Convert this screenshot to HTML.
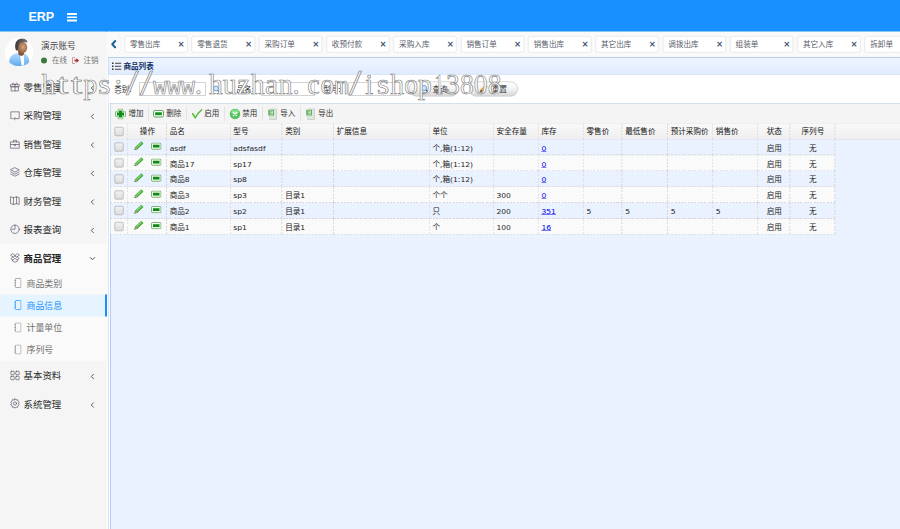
<!DOCTYPE html>
<html lang="zh-CN"><head><meta charset="utf-8"><title>ERP</title>
<style>
html,body{margin:0;padding:0;width:900px;height:529px;overflow:hidden;background:#fafafa;}
#root{position:absolute;left:0;top:0;width:1800px;height:1058px;transform:scale(.5);transform-origin:0 0;font-family:"Liberation Sans","Noto Sans CJK SC",sans-serif;color:#333;overflow:hidden;background:#fafafa;}
#root *{box-sizing:border-box;}
.abs{position:absolute;}
#hdr{position:absolute;left:0;top:0;width:1800px;height:63.6px;background:#1890ff;}
#logo{position:absolute;left:57px;top:15px;font-size:25px;line-height:34px;font-weight:bold;color:#fff;}
#burger{position:absolute;left:134px;top:26px;width:20px;height:17px;}
#burger i{position:absolute;left:0;width:20px;height:3.6px;background:#fff;border-radius:1px;}
#side{position:absolute;left:0;top:63px;width:213.4px;height:995px;background:#f5f5f5;}
#avatar{position:absolute;left:10px;top:13px;width:57px;height:57px;border-radius:50%;background:#fff;overflow:hidden;}
#uname{position:absolute;left:82px;top:16px;font-size:17.4px;line-height:26px;color:#444;font-weight:400;white-space:nowrap;}
#ustat{position:absolute;left:82px;top:47px;font-size:15px;line-height:22px;color:#777;white-space:nowrap;}
#ustat .dot{position:absolute;left:0;top:5px;width:12px;height:12px;border-radius:50%;background:#3a7a3d;}
.mi{position:absolute;left:0;width:214px;height:57px;line-height:57px;font-size:18.9px;color:#2a2a2a;font-weight:400;white-space:nowrap;}
.mi .t{position:absolute;left:47px;top:0;}
.mi svg.ic{position:absolute;left:19px;top:16.5px;width:22px;height:22px;}
.mi svg.ar{position:absolute;left:180px;top:23px;width:10px;height:14px;}
.mi.act{background:#fafafa;color:#222;font-weight:700;}
#sub{position:absolute;left:0;width:214px;background:#fafafa;}
.si{position:absolute;left:0;width:214px;height:44px;line-height:44px;font-size:17.8px;color:#717171;white-space:nowrap;}
.si .t{position:absolute;left:53px;top:0;}
.si svg{position:absolute;left:28px;top:11px;width:15px;height:20px;color:#8c8c8c;}
.si.act svg{color:#1890ff;}
.si.act{background:#e6f4ff;color:#1890ff;border-right:4px solid #1890ff;}
/* tabs */
#tabs{position:absolute;left:214px;top:63px;width:1586px;height:52px;background:#fafafa;}
#tleft{position:absolute;left:2px;top:8px;width:24.5px;height:35px;border-right:1.5px solid #dcdcdc;border-radius:0 5px 5px 0;}
.tab{position:absolute;top:8.6px;width:126.2px;height:33px;background:#fff;border:1px solid #d9d9d9;border-radius:4px;font-size:15.2px;line-height:31px;color:#5a606a;white-space:nowrap;}
.tab .t{position:absolute;left:10px;top:0;}
.tab .x{position:absolute;right:4.5px;top:-1px;font-size:17px;font-weight:bold;color:#3f5573;font-family:"DejaVu Sans","Liberation Sans",sans-serif;}
/* panel */
#panel{font-family:"DejaVu Sans","Noto Sans CJK SC",sans-serif;position:absolute;left:216px;top:114.5px;width:1600px;height:960px;border:1px solid #7da7e2;background:#eaf2ff;}
#ptitle{position:absolute;left:0;top:0;width:100%;height:33.5px;background:linear-gradient(#eff5ff,#e0ecff);border-bottom:1px solid #7da7e2;}
#ptitle .t{position:absolute;left:30px;top:1.500px;line-height:33px;font-size:15.1px;font-weight:bold;color:#0e2d5f;white-space:nowrap;}
#search{position:absolute;left:0;top:33.5px;width:100%;height:57px;background:#fff;}
.lbl{position:absolute;font-size:15px;line-height:26px;color:#222;white-space:nowrap;}
.inp{position:absolute;height:26px;border:1px solid #a8a8a8;background:#fff;}
.pill{position:absolute;top:15px;height:30px;border:1px solid #b0b0b0;border-radius:15px;background:linear-gradient(#ffffff 0%,#f4f4f4 45%,#d8d8d8 100%);font-size:15px;line-height:28px;color:#333;white-space:nowrap;}
#grid{position:absolute;left:3px;top:90.5px;width:1600px;height:900px;border-left:1px solid #7da7e2;border-top:1px solid #7da7e2;}
#tb{position:absolute;left:0;top:0;width:100%;height:40px;background:#f4f4f4;border-bottom:1px solid #d4d4d4;}
.tbtn{position:absolute;top:0;height:40px;line-height:41px;font-size:15px;color:#333;white-space:nowrap;}
.tsep{position:absolute;top:6px;width:2px;height:29px;border-left:1px solid #ccc;border-right:1px solid #fff;}
#gh{position:absolute;left:0;top:40px;width:100%;height:32px;background:linear-gradient(#f9f9f9,#efefef);border-bottom:1px solid #d4d4d4;}
.hc{position:absolute;top:0;height:31px;line-height:33px;font-size:15.2px;color:#111;font-weight:400;white-space:nowrap;padding-left:5.500px;overflow:hidden;background-image:repeating-linear-gradient(to bottom,#cdcdcd 0 4px,transparent 4px 6.6px);background-size:1.500px 100%;background-position:right top;background-repeat:no-repeat;}
.row{position:absolute;left:0;height:31.75px;}
.c{position:absolute;top:0;height:100%;line-height:34.5px;font-size:15.2px;color:#222;white-space:nowrap;padding-left:5.500px;overflow:hidden;background-image:repeating-linear-gradient(to bottom,#cdcdcd 0 4px,transparent 4px 6.6px),repeating-linear-gradient(to right,#cdcdcd 0 4px,transparent 4px 6.6px);background-size:1.500px 100%,100% 1.500px;background-position:right top,left bottom;background-repeat:no-repeat;}
.c a{color:#00e;text-decoration:underline;}
.cb{position:absolute;width:18px;height:18px;border:1px solid #8c8c8c;border-radius:3px;background:linear-gradient(#f2f2f2,#dcdcdc);}
#wm{position:absolute;left:0;top:0;width:1800px;height:1058px;pointer-events:none;}
</style></head>
<body>
<div id="root">
<div id="hdr"><div id="logo">ERP</div><div id="burger"><i style="top:0"></i><i style="top:6.6px"></i><i style="top:13.2px"></i></div></div>
<div id="side">
<div id="avatar"><svg width="57" height="57" viewBox="0 0 57 57">
<defs><linearGradient id="hr" x1="0" y1="0" x2="1" y2="0"><stop offset="0" stop-color="#3a3a3a"/><stop offset="1" stop-color="#767676"/></linearGradient><radialGradient id="sk" cx="0.6" cy="0.45" r="0.6"><stop offset="0" stop-color="#d9a57a"/><stop offset="1" stop-color="#8a5a3a"/></radialGradient>
<linearGradient id="sh" x1="0" y1="0" x2="0" y2="1"><stop offset="0" stop-color="#b4dcff"/><stop offset="1" stop-color="#5fa9ee"/></linearGradient></defs>
<path d="M8.500 50 C7 38 16 31 26 30 L36 30 C44 32 50 40 48 51 C40 58.500 16 58.500 8.500 50Z" fill="url(#sh)"/>
<path d="M30 33 L37.500 33 L38.500 54 L33.500 56Z" fill="#fff"/>
<path d="M26 25 L39 25 L37.500 33 C34.500 37 30 36.500 27 33Z" fill="#86583a"/>
<ellipse cx="34.500" cy="19" rx="10" ry="11.500" fill="url(#sk)"/>
<path d="M21 22 C18 8 26 0 36 1 C42 1.500 45.500 5 44.500 9.500 C38 7 30 8 27.500 13 C26.500 18 26.500 22 25 25.500 C22.500 25.500 21.500 24 21 22Z" fill="url(#hr)"/>
</svg></div>
<div id="uname">演示账号</div>
<div id="ustat"><span class="dot"></span><span style="position:absolute;left:22px;top:0">在线</span>
<svg style="position:absolute;left:62px;top:4px" width="15" height="14" viewBox="0 0 15 14"><path d="M6 1H1v12h5" fill="none" stroke="#c88" stroke-width="1.6"/><path d="M5 5h4V2l5 5-5 5V9H5z" fill="#b0303a"/></svg>
<span style="position:absolute;left:85px;top:0">注销</span></div>
<div class="mi" style="top:82.5px"><svg class="ic" viewBox="0 0 21 21" fill="none" stroke="#5e5266" stroke-width="1.3" stroke-linejoin="round" stroke-linecap="round"><rect x="2.5" y="7" width="16" height="4" /><rect x="4" y="11" width="13" height="8"/><path d="M10.5 7v12M10.5 7C8 2 4 4 6 6.5M10.5 7C13 2 17 4 15 6.5"/></svg><span class="t">零售管理</span><svg class="ar" viewBox="0 0 10 14" fill="none" stroke="#555" stroke-width="1.900"><path d="M7.500 2L2.500 7l5 5"/></svg></div>
<div class="mi" style="top:140.0px"><svg class="ic" viewBox="0 0 21 21" fill="none" stroke="#5e5266" stroke-width="1.3" stroke-linejoin="round" stroke-linecap="round"><path d="M13.5 16.5h5v-13h-16v13h3"/><path d="M12.5 16.5h-4M10.500 14.500l-2 2 2 2"/></svg><span class="t">采购管理</span><svg class="ar" viewBox="0 0 10 14" fill="none" stroke="#555" stroke-width="1.900"><path d="M7.500 2L2.500 7l5 5"/></svg></div>
<div class="mi" style="top:197.0px"><svg class="ic" viewBox="0 0 21 21" fill="none" stroke="#5e5266" stroke-width="1.3" stroke-linejoin="round" stroke-linecap="round"><rect x="2.5" y="6.5" width="16" height="12"/><path d="M7.500 6.500v-3h6v3M2.5 11.500h16M9 11.500v2h3v-2"/></svg><span class="t">销售管理</span><svg class="ar" viewBox="0 0 10 14" fill="none" stroke="#555" stroke-width="1.900"><path d="M7.500 2L2.500 7l5 5"/></svg></div>
<div class="mi" style="top:253.5px"><svg class="ic" viewBox="0 0 21 21" fill="none" stroke="#5e5266" stroke-width="1.3" stroke-linejoin="round" stroke-linecap="round"><path d="M10.500 2.500l8 4-8 4-8-4zM2.500 10.500l8 4 8-4M2.500 14.500l8 4 8-4"/></svg><span class="t">仓库管理</span><svg class="ar" viewBox="0 0 10 14" fill="none" stroke="#555" stroke-width="1.900"><path d="M7.500 2L2.500 7l5 5"/></svg></div>
<div class="mi" style="top:310.5px"><svg class="ic" viewBox="0 0 21 21" fill="none" stroke="#5e5266" stroke-width="1.3" stroke-linejoin="round" stroke-linecap="round"><path d="M2.500 3.500l5 1.500v13l-5-1.500zM7.500 5l6-1.500v13l-6 1.500M13.500 3.500l5 1.500v13l-5-1.500"/></svg><span class="t">财务管理</span><svg class="ar" viewBox="0 0 10 14" fill="none" stroke="#555" stroke-width="1.900"><path d="M7.500 2L2.500 7l5 5"/></svg></div>
<div class="mi" style="top:367.5px"><svg class="ic" viewBox="0 0 21 21" fill="none" stroke="#5e5266" stroke-width="1.3" stroke-linejoin="round" stroke-linecap="round"><circle cx="10.500" cy="11" r="8"/><path d="M10.500 3v8h-6"/></svg><span class="t">报表查询</span><svg class="ar" viewBox="0 0 10 14" fill="none" stroke="#555" stroke-width="1.900"><path d="M7.500 2L2.500 7l5 5"/></svg></div>
<div class="mi act" style="top:424.5px"><svg class="ic" viewBox="0 0 21 21" fill="none" stroke="#5e5266" stroke-width="1.3" stroke-linejoin="round" stroke-linecap="round"><path d="M10.500 6.500l-5-3.500-3.500 3 5 3.500zM10.500 6.500l5-3.500 3.500 3-5 3.500zM7 9.500l-4.500 3 4 3 4-3.500 4 3.500 4-3-4.500-3M5.500 15.500v1.500l5 2.500 5-2.500v-1.500"/></svg><span class="t">商品管理</span><svg class="ar" style="left:178px;top:24px;width:14px;height:10px" viewBox="0 0 14 10" fill="none" stroke="#444" stroke-width="1.900"><path d="M2 2.500l5 5 5-5"/></svg></div>
<div class="mi" style="top:660.1px"><svg class="ic" viewBox="0 0 21 21" fill="none" stroke="#5e5266" stroke-width="1.3" stroke-linejoin="round" stroke-linecap="round"><rect x="2.500" y="2.500" width="6.500" height="6.500" rx="1"/><rect x="12" y="2.500" width="6.500" height="6.500" rx="1"/><rect x="2.500" y="12" width="6.500" height="6.500" rx="1"/><rect x="12" y="12" width="6.500" height="6.500" rx="1"/></svg><span class="t">基本资料</span><svg class="ar" viewBox="0 0 10 14" fill="none" stroke="#555" stroke-width="1.900"><path d="M7.500 2L2.500 7l5 5"/></svg></div>
<div class="mi" style="top:716.9px"><svg class="ic" viewBox="0 0 21 21" fill="none" stroke="#5e5266" stroke-width="1.3" stroke-linejoin="round" stroke-linecap="round"><circle cx="10.500" cy="10.500" r="3"/><path d="M10.500 1.500l2 2.300 3-.6.600 3 2.400 1.800-1.500 2.500 1.500 2.500-2.400 1.800-.600 3-3-.600-2 2.300-2-2.300-3 .600-.600-3-2.400-1.800 1.500-2.500-1.500-2.500 2.400-1.800.600-3 3 .600z"/></svg><span class="t">系统管理</span><svg class="ar" viewBox="0 0 10 14" fill="none" stroke="#555" stroke-width="1.900"><path d="M7.500 2L2.500 7l5 5"/></svg></div>
<div id="sub" style="top:481.4px;height:179.0px">
<div class="si" style="top:0.6px"><svg viewBox="0 0 15 20" fill="none" stroke="currentColor" stroke-width="1.400"><rect x="2.500" y="1" width="11.500" height="18" rx="1.500"/><path d="M1 5h3M1 10h3M1 15h3"/></svg><span class="t">商品类别</span></div>
<div class="si act" style="top:44.8px"><svg viewBox="0 0 15 20" fill="none" stroke="currentColor" stroke-width="1.400"><rect x="2.500" y="1" width="11.500" height="18" rx="1.500"/><path d="M1 5h3M1 10h3M1 15h3"/></svg><span class="t">商品信息</span></div>
<div class="si" style="top:89.6px"><svg viewBox="0 0 15 20" fill="none" stroke="currentColor" stroke-width="1.400"><rect x="2.500" y="1" width="11.500" height="18" rx="1.500"/><path d="M1 5h3M1 10h3M1 15h3"/></svg><span class="t">计量单位</span></div>
<div class="si" style="top:133.6px"><svg viewBox="0 0 15 20" fill="none" stroke="currentColor" stroke-width="1.400"><rect x="2.500" y="1" width="11.500" height="18" rx="1.500"/><path d="M1 5h3M1 10h3M1 15h3"/></svg><span class="t">序列号</span></div>
</div>
</div>
<div id="tabs">
<div id="tleft"><svg style="position:absolute;left:5px;top:9px" width="12" height="17" viewBox="0 0 12 17" fill="none" stroke="#14609a" stroke-width="3.800" stroke-linecap="round" stroke-linejoin="round"><path d="M9.500 2L3.500 8.500l6 6.500"/></svg></div>
<div class="tab" style="left:34.8px"><span class="t">零售出库</span><span class="x">×</span></div>
<div class="tab" style="left:169.4px"><span class="t">零售退货</span><span class="x">×</span></div>
<div class="tab" style="left:304.0px"><span class="t">采购订单</span><span class="x">×</span></div>
<div class="tab" style="left:438.6px"><span class="t">收预付款</span><span class="x">×</span></div>
<div class="tab" style="left:573.2px"><span class="t">采购入库</span><span class="x">×</span></div>
<div class="tab" style="left:707.8px"><span class="t">销售订单</span><span class="x">×</span></div>
<div class="tab" style="left:842.4px"><span class="t">销售出库</span><span class="x">×</span></div>
<div class="tab" style="left:977.0px"><span class="t">其它出库</span><span class="x">×</span></div>
<div class="tab" style="left:1111.6px"><span class="t">调拨出库</span><span class="x">×</span></div>
<div class="tab" style="left:1246.2px"><span class="t">组装单</span><span class="x">×</span></div>
<div class="tab" style="left:1380.8px"><span class="t">其它入库</span><span class="x">×</span></div>
<div class="tab" style="left:1515.4px"><span class="t">拆卸单</span><span class="x">×</span></div>
</div>
<div id="panel">
<div style="position:absolute;left:0;top:33px;width:3px;height:1000px;background:#fff"></div>
<div id="ptitle"><svg style="position:absolute;left:7px;top:8px" width="19" height="17" viewBox="0 0 19 17"><g fill="#333"><rect x="0" y="1" width="3" height="3"/><rect x="0" y="7" width="3" height="3"/><rect x="0" y="13" width="3" height="3"/><rect x="6" y="1.600" width="13" height="1.800"/><rect x="6" y="7.600" width="13" height="1.800"/><rect x="6" y="13.600" width="13" height="1.800"/></g></svg><span class="t">商品列表</span></div>
<div id="search">
<span class="lbl" style="left:11.6px;top:17.0px">类别:</span>
<div class="inp" style="left:61.0px;top:16.0px;width:133.6px"></div>
<svg style="position:absolute;left:208.0px;top:21.0px" width="18" height="18" viewBox="0 0 18 18"><circle cx="7" cy="7" r="5" fill="#cfe6fb" stroke="#4a90d9" stroke-width="1.600"/><path d="M11 11l5 5" stroke="#2c5c9c" stroke-width="2.400"/></svg>
<span class="lbl" style="left:256.0px;top:17.0px">品名:</span>
<div class="inp" style="left:306.4px;top:16.0px;width:106.6px"></div>
<span class="lbl" style="left:429.6px;top:17.0px">型号:</span>
<div class="inp" style="left:479.6px;top:16.0px;width:105.0px"></div>
<div class="pill" style="left:601.0px;top:13.6px;width:98.6px"><svg style="position:absolute;left:22px;top:5px" width="18" height="18" viewBox="0 0 18 18"><circle cx="7" cy="7" r="5" fill="#cfe6fb" stroke="#4a90d9" stroke-width="1.600"/><path d="M11 11l5 5" stroke="#2c5c9c" stroke-width="2.400"/></svg><span style="position:absolute;left:46px;top:0">查询</span></div>
<div class="pill" style="left:721.0px;top:13.6px;width:98.0px"><svg style="position:absolute;left:18px;top:5px" width="20" height="18" viewBox="0 0 20 18"><path d="M3 16l2-6 9-9 3 3-9 9z" fill="#f5a623" stroke="#c77a12" stroke-width="1"/><path d="M3 16l2-6 3 3z" fill="#5a4a3a"/></svg><span style="position:absolute;left:45px;top:0">重置</span></div>
</div>
<div id="grid">
<div id="tb">
<div class="tbtn" style="left:9.0px"><span style="position:absolute;left:0;top:9.5px;line-height:0"><svg width="22" height="22" viewBox="0 0 22 22"><path d="M6.500 1h9v5.500H21v9h-5.500V21h-9v-5.500H1v-9h5.500z" fill="#fff" stroke="#48a348" stroke-width="1.300" stroke-linejoin="round"/><path d="M8 3.800h6V8h4.200v6H14v4.200H8V14H3.800V8H8z" fill="#0f9018"/></svg></span><span style="position:absolute;left:27.0px;top:0">增加</span></div>
<div class="tbtn" style="left:85.0px"><span style="position:absolute;left:0;top:9.5px;line-height:0"><svg width="22" height="22" viewBox="0 0 22 22"><rect x="1" y="4" width="20" height="13" rx="3" fill="#fff" stroke="#3f9c3f" stroke-width="1.700"/><rect x="4.200" y="7.600" width="13.600" height="5.800" rx="1" fill="#11931a"/></svg></span><span style="position:absolute;left:26.6px;top:0">删除</span></div>
<div class="tbtn" style="left:161.6px"><span style="position:absolute;left:0;top:9.5px;line-height:0"><svg width="22" height="22" viewBox="0 0 22 22"><path d="M2.500 10.500l5 8C11 12 15.500 6.500 20.500 2.500" fill="none" stroke="#45ad2c" stroke-width="3" stroke-linecap="round" stroke-linejoin="round"/><path d="M3 11l4.500 7C11 12 15.500 6.500 20 3" fill="none" stroke="#7be35a" stroke-width="1.200" stroke-linecap="round" stroke-linejoin="round"/></svg></span><span style="position:absolute;left:26.0px;top:0">启用</span></div>
<div class="tbtn" style="left:238.4px"><span style="position:absolute;left:0;top:9.5px;line-height:0"><svg width="22" height="22" viewBox="0 0 22 22"><circle cx="11" cy="11" r="10" fill="#4cc656" stroke="#48b050" stroke-width="1"/><ellipse cx="11" cy="7" rx="7.500" ry="5" fill="#b0f0b4" opacity=".55"/><path d="M7.500 7.500l7 7M14.500 7.500l-7 7" stroke="#fff" stroke-width="2.300" stroke-linecap="round"/></svg></span><span style="position:absolute;left:25.2px;top:0">禁用</span></div>
<div class="tbtn" style="left:315.0px"><span style="position:absolute;left:0;top:9.5px;line-height:0"><svg width="18" height="23" viewBox="0 0 18 23"><path d="M4.500 .500H17v21.500H3.500v-7" fill="#dde7dd" stroke="#a9b9a9" stroke-width="1"/><rect x=".500" y="2.500" width="11.500" height="11.500" fill="#5db05d"/><path d="M3.500 5h5.500v6.500H3.500M3.500 8.200h5.500" fill="none" stroke="#e8f6e8" stroke-width="1.400"/></svg></span><span style="position:absolute;left:24.6px;top:0">导入</span></div>
<div class="tbtn" style="left:391.0px"><span style="position:absolute;left:0;top:9.5px;line-height:0"><svg width="18" height="23" viewBox="0 0 18 23"><path d="M4.500 .500H17v21.500H3.500v-7" fill="#dde7dd" stroke="#a9b9a9" stroke-width="1"/><rect x=".500" y="2.500" width="11.500" height="11.500" fill="#5db05d"/><path d="M3.500 5h5.500v6.500H3.500M3.500 8.200h5.500" fill="none" stroke="#e8f6e8" stroke-width="1.400"/></svg></span><span style="position:absolute;left:24.6px;top:0">导出</span></div>
<div class="tsep" style="left:74.6px"></div>
<div class="tsep" style="left:150.6px"></div>
<div class="tsep" style="left:226.6px"></div>
<div class="tsep" style="left:302.6px"></div>
<div class="tsep" style="left:378.6px"></div>
</div>
<div id="gh">
<div class="hc" style="left:0.0px;width:35.0px;padding:0"><span class="cb" style="left:7.5px;top:7px"></span></div>
<div class="hc" style="left:35.0px;width:77.8px;text-align:center;padding-left:0;">操作</div>
<div class="hc" style="left:112.8px;width:127.4px;">品名</div>
<div class="hc" style="left:240.2px;width:103.6px;">型号</div>
<div class="hc" style="left:343.8px;width:103.0px;">类别</div>
<div class="hc" style="left:446.8px;width:191.6px;">扩展信息</div>
<div class="hc" style="left:638.4px;width:128.0px;">单位</div>
<div class="hc" style="left:766.4px;width:90.0px;">安全存量</div>
<div class="hc" style="left:856.4px;width:90.0px;">库存</div>
<div class="hc" style="left:946.4px;width:77.4px;">零售价</div>
<div class="hc" style="left:1023.8px;width:91.0px;">最低售价</div>
<div class="hc" style="left:1114.8px;width:90.4px;">预计采购价</div>
<div class="hc" style="left:1205.2px;width:90.0px;">销售价</div>
<div class="hc" style="left:1295.2px;width:64.6px;text-align:center;padding-left:0;">状态</div>
<div class="hc" style="left:1359.8px;width:90.0px;text-align:center;padding-left:0;">序列号</div>
</div>
<div class="row" style="top:71.8px;width:1449.0px;background:#eaf2ff">
<div class="c" style="left:0.0px;width:35.0px;padding:0"><span class="cb" style="left:7.5px;top:6.5px"></span></div>
<div class="c" style="left:35.0px;width:77.8px;padding:0"><svg style="position:absolute;left:11.5px;top:3.5px" width="20" height="19" viewBox="0 0 20 19"><path d="M1.500 17.500l1.800-5.500L14.500 1.500l3.800 3.500L7 15.500z" fill="#4cc238" stroke="#2a8a22" stroke-width="1.200"/><path d="M4.500 13l10-9.500" stroke="#b6f0a0" stroke-width="1.500"/><path d="M1.500 17.500l1.800-5.500 3.700 3.500z" fill="#d8d0b0" stroke="#5a5a4a" stroke-width=".800"/></svg><svg style="position:absolute;left:45.5px;top:6.5px" width="21" height="15" viewBox="0 0 21 15"><rect x="1" y="1" width="19" height="12.500" rx="2" fill="#eef8ec" stroke="#4a9a44" stroke-width="1.400"/><rect x="4" y="4.500" width="13" height="5.500" fill="#0e8a12"/></svg></div>
<div class="c" style="left:112.8px;width:127.4px;">asdf</div>
<div class="c" style="left:240.2px;width:103.6px;">adsfasdf</div>
<div class="c" style="left:343.8px;width:103.0px;"></div>
<div class="c" style="left:446.8px;width:191.6px;"></div>
<div class="c" style="left:638.4px;width:128.0px;">个,箱(1:12)</div>
<div class="c" style="left:766.4px;width:90.0px;"></div>
<div class="c" style="left:856.4px;width:90.0px;"><a>0</a></div>
<div class="c" style="left:946.4px;width:77.4px;"></div>
<div class="c" style="left:1023.8px;width:91.0px;"></div>
<div class="c" style="left:1114.8px;width:90.4px;"></div>
<div class="c" style="left:1205.2px;width:90.0px;"></div>
<div class="c" style="left:1295.2px;width:64.6px;text-align:center;padding-left:0;">启用</div>
<div class="c" style="left:1359.8px;width:90.0px;text-align:center;padding-left:0;">无</div>
</div>
<div class="row" style="top:103.5px;width:1449.0px;background:#fafafa">
<div class="c" style="left:0.0px;width:35.0px;padding:0"><span class="cb" style="left:7.5px;top:6.5px"></span></div>
<div class="c" style="left:35.0px;width:77.8px;padding:0"><svg style="position:absolute;left:11.5px;top:3.5px" width="20" height="19" viewBox="0 0 20 19"><path d="M1.500 17.500l1.800-5.500L14.500 1.500l3.800 3.500L7 15.500z" fill="#4cc238" stroke="#2a8a22" stroke-width="1.200"/><path d="M4.500 13l10-9.500" stroke="#b6f0a0" stroke-width="1.500"/><path d="M1.500 17.500l1.800-5.500 3.700 3.500z" fill="#d8d0b0" stroke="#5a5a4a" stroke-width=".800"/></svg><svg style="position:absolute;left:45.5px;top:6.5px" width="21" height="15" viewBox="0 0 21 15"><rect x="1" y="1" width="19" height="12.500" rx="2" fill="#eef8ec" stroke="#4a9a44" stroke-width="1.400"/><rect x="4" y="4.500" width="13" height="5.500" fill="#0e8a12"/></svg></div>
<div class="c" style="left:112.8px;width:127.4px;">商品17</div>
<div class="c" style="left:240.2px;width:103.6px;">sp17</div>
<div class="c" style="left:343.8px;width:103.0px;"></div>
<div class="c" style="left:446.8px;width:191.6px;"></div>
<div class="c" style="left:638.4px;width:128.0px;">个,箱(1:12)</div>
<div class="c" style="left:766.4px;width:90.0px;"></div>
<div class="c" style="left:856.4px;width:90.0px;"><a>0</a></div>
<div class="c" style="left:946.4px;width:77.4px;"></div>
<div class="c" style="left:1023.8px;width:91.0px;"></div>
<div class="c" style="left:1114.8px;width:90.4px;"></div>
<div class="c" style="left:1205.2px;width:90.0px;"></div>
<div class="c" style="left:1295.2px;width:64.6px;text-align:center;padding-left:0;">启用</div>
<div class="c" style="left:1359.8px;width:90.0px;text-align:center;padding-left:0;">无</div>
</div>
<div class="row" style="top:135.3px;width:1449.0px;background:#eaf2ff">
<div class="c" style="left:0.0px;width:35.0px;padding:0"><span class="cb" style="left:7.5px;top:6.5px"></span></div>
<div class="c" style="left:35.0px;width:77.8px;padding:0"><svg style="position:absolute;left:11.5px;top:3.5px" width="20" height="19" viewBox="0 0 20 19"><path d="M1.500 17.500l1.800-5.500L14.500 1.500l3.800 3.500L7 15.500z" fill="#4cc238" stroke="#2a8a22" stroke-width="1.200"/><path d="M4.500 13l10-9.500" stroke="#b6f0a0" stroke-width="1.500"/><path d="M1.500 17.500l1.800-5.500 3.700 3.500z" fill="#d8d0b0" stroke="#5a5a4a" stroke-width=".800"/></svg><svg style="position:absolute;left:45.5px;top:6.5px" width="21" height="15" viewBox="0 0 21 15"><rect x="1" y="1" width="19" height="12.500" rx="2" fill="#eef8ec" stroke="#4a9a44" stroke-width="1.400"/><rect x="4" y="4.500" width="13" height="5.500" fill="#0e8a12"/></svg></div>
<div class="c" style="left:112.8px;width:127.4px;">商品8</div>
<div class="c" style="left:240.2px;width:103.6px;">sp8</div>
<div class="c" style="left:343.8px;width:103.0px;"></div>
<div class="c" style="left:446.8px;width:191.6px;"></div>
<div class="c" style="left:638.4px;width:128.0px;">个,箱(1:12)</div>
<div class="c" style="left:766.4px;width:90.0px;"></div>
<div class="c" style="left:856.4px;width:90.0px;"><a>0</a></div>
<div class="c" style="left:946.4px;width:77.4px;"></div>
<div class="c" style="left:1023.8px;width:91.0px;"></div>
<div class="c" style="left:1114.8px;width:90.4px;"></div>
<div class="c" style="left:1205.2px;width:90.0px;"></div>
<div class="c" style="left:1295.2px;width:64.6px;text-align:center;padding-left:0;">启用</div>
<div class="c" style="left:1359.8px;width:90.0px;text-align:center;padding-left:0;">无</div>
</div>
<div class="row" style="top:167.1px;width:1449.0px;background:#fafafa">
<div class="c" style="left:0.0px;width:35.0px;padding:0"><span class="cb" style="left:7.5px;top:6.5px"></span></div>
<div class="c" style="left:35.0px;width:77.8px;padding:0"><svg style="position:absolute;left:11.5px;top:3.5px" width="20" height="19" viewBox="0 0 20 19"><path d="M1.500 17.500l1.800-5.500L14.500 1.500l3.800 3.500L7 15.500z" fill="#4cc238" stroke="#2a8a22" stroke-width="1.200"/><path d="M4.500 13l10-9.500" stroke="#b6f0a0" stroke-width="1.500"/><path d="M1.500 17.500l1.800-5.500 3.700 3.500z" fill="#d8d0b0" stroke="#5a5a4a" stroke-width=".800"/></svg><svg style="position:absolute;left:45.5px;top:6.5px" width="21" height="15" viewBox="0 0 21 15"><rect x="1" y="1" width="19" height="12.500" rx="2" fill="#eef8ec" stroke="#4a9a44" stroke-width="1.400"/><rect x="4" y="4.500" width="13" height="5.500" fill="#0e8a12"/></svg></div>
<div class="c" style="left:112.8px;width:127.4px;">商品3</div>
<div class="c" style="left:240.2px;width:103.6px;">sp3</div>
<div class="c" style="left:343.8px;width:103.0px;">目录1</div>
<div class="c" style="left:446.8px;width:191.6px;"></div>
<div class="c" style="left:638.4px;width:128.0px;">个个</div>
<div class="c" style="left:766.4px;width:90.0px;">300</div>
<div class="c" style="left:856.4px;width:90.0px;"><a>0</a></div>
<div class="c" style="left:946.4px;width:77.4px;"></div>
<div class="c" style="left:1023.8px;width:91.0px;"></div>
<div class="c" style="left:1114.8px;width:90.4px;"></div>
<div class="c" style="left:1205.2px;width:90.0px;"></div>
<div class="c" style="left:1295.2px;width:64.6px;text-align:center;padding-left:0;">启用</div>
<div class="c" style="left:1359.8px;width:90.0px;text-align:center;padding-left:0;">无</div>
</div>
<div class="row" style="top:198.8px;width:1449.0px;background:#eaf2ff">
<div class="c" style="left:0.0px;width:35.0px;padding:0"><span class="cb" style="left:7.5px;top:6.5px"></span></div>
<div class="c" style="left:35.0px;width:77.8px;padding:0"><svg style="position:absolute;left:11.5px;top:3.5px" width="20" height="19" viewBox="0 0 20 19"><path d="M1.500 17.500l1.800-5.500L14.500 1.500l3.800 3.500L7 15.500z" fill="#4cc238" stroke="#2a8a22" stroke-width="1.200"/><path d="M4.500 13l10-9.500" stroke="#b6f0a0" stroke-width="1.500"/><path d="M1.500 17.500l1.800-5.500 3.700 3.500z" fill="#d8d0b0" stroke="#5a5a4a" stroke-width=".800"/></svg><svg style="position:absolute;left:45.5px;top:6.5px" width="21" height="15" viewBox="0 0 21 15"><rect x="1" y="1" width="19" height="12.500" rx="2" fill="#eef8ec" stroke="#4a9a44" stroke-width="1.400"/><rect x="4" y="4.500" width="13" height="5.500" fill="#0e8a12"/></svg></div>
<div class="c" style="left:112.8px;width:127.4px;">商品2</div>
<div class="c" style="left:240.2px;width:103.6px;">sp2</div>
<div class="c" style="left:343.8px;width:103.0px;">目录1</div>
<div class="c" style="left:446.8px;width:191.6px;"></div>
<div class="c" style="left:638.4px;width:128.0px;">只</div>
<div class="c" style="left:766.4px;width:90.0px;">200</div>
<div class="c" style="left:856.4px;width:90.0px;"><a>351</a></div>
<div class="c" style="left:946.4px;width:77.4px;">5</div>
<div class="c" style="left:1023.8px;width:91.0px;">5</div>
<div class="c" style="left:1114.8px;width:90.4px;">5</div>
<div class="c" style="left:1205.2px;width:90.0px;">5</div>
<div class="c" style="left:1295.2px;width:64.6px;text-align:center;padding-left:0;">启用</div>
<div class="c" style="left:1359.8px;width:90.0px;text-align:center;padding-left:0;">无</div>
</div>
<div class="row" style="top:230.6px;width:1449.0px;background:#fafafa">
<div class="c" style="left:0.0px;width:35.0px;padding:0"><span class="cb" style="left:7.5px;top:6.5px"></span></div>
<div class="c" style="left:35.0px;width:77.8px;padding:0"><svg style="position:absolute;left:11.5px;top:3.5px" width="20" height="19" viewBox="0 0 20 19"><path d="M1.500 17.500l1.800-5.500L14.500 1.500l3.800 3.500L7 15.500z" fill="#4cc238" stroke="#2a8a22" stroke-width="1.200"/><path d="M4.500 13l10-9.500" stroke="#b6f0a0" stroke-width="1.500"/><path d="M1.500 17.500l1.800-5.500 3.700 3.500z" fill="#d8d0b0" stroke="#5a5a4a" stroke-width=".800"/></svg><svg style="position:absolute;left:45.5px;top:6.5px" width="21" height="15" viewBox="0 0 21 15"><rect x="1" y="1" width="19" height="12.500" rx="2" fill="#eef8ec" stroke="#4a9a44" stroke-width="1.400"/><rect x="4" y="4.500" width="13" height="5.500" fill="#0e8a12"/></svg></div>
<div class="c" style="left:112.8px;width:127.4px;">商品1</div>
<div class="c" style="left:240.2px;width:103.6px;">sp1</div>
<div class="c" style="left:343.8px;width:103.0px;">目录1</div>
<div class="c" style="left:446.8px;width:191.6px;"></div>
<div class="c" style="left:638.4px;width:128.0px;">个</div>
<div class="c" style="left:766.4px;width:90.0px;">100</div>
<div class="c" style="left:856.4px;width:90.0px;"><a>16</a></div>
<div class="c" style="left:946.4px;width:77.4px;"></div>
<div class="c" style="left:1023.8px;width:91.0px;"></div>
<div class="c" style="left:1114.8px;width:90.4px;"></div>
<div class="c" style="left:1205.2px;width:90.0px;"></div>
<div class="c" style="left:1295.2px;width:64.6px;text-align:center;padding-left:0;">启用</div>
<div class="c" style="left:1359.8px;width:90.0px;text-align:center;padding-left:0;">无</div>
</div>
</div>
</div>
<svg id="wm" viewBox="0 0 1800 1058"><text font-family="'Liberation Serif',serif" font-size="58" text-anchor="middle" fill="#fff" stroke="#7a7a7a" stroke-width="1.25"><tspan x="97.1" y="188" textLength="27.5" lengthAdjust="spacingAndGlyphs">h</tspan><tspan x="125.0" y="188" textLength="23" lengthAdjust="spacingAndGlyphs">t</tspan><tspan x="152.9" y="188" textLength="23" lengthAdjust="spacingAndGlyphs">t</tspan><tspan x="180.8" y="188" textLength="27.5" lengthAdjust="spacingAndGlyphs">p</tspan><tspan x="208.7" y="188" textLength="24.5" lengthAdjust="spacingAndGlyphs">s</tspan><tspan x="236.5" y="188">:</tspan><tspan x="264.4" y="190.5" font-size="73" textLength="25" lengthAdjust="spacingAndGlyphs">/</tspan><tspan x="292.3" y="190.5" font-size="73" textLength="25" lengthAdjust="spacingAndGlyphs">/</tspan><tspan x="320.2" y="188" font-family="'Liberation Mono',monospace" font-size="47">w</tspan><tspan x="348.1" y="188" font-family="'Liberation Mono',monospace" font-size="47">w</tspan><tspan x="375.9" y="188" font-family="'Liberation Mono',monospace" font-size="47">w</tspan><tspan x="396.8" y="188">.</tspan><tspan x="431.7" y="188" textLength="27.5" lengthAdjust="spacingAndGlyphs">h</tspan><tspan x="459.6" y="188" textLength="27.5" lengthAdjust="spacingAndGlyphs">u</tspan><tspan x="487.5" y="188" textLength="25" lengthAdjust="spacingAndGlyphs">z</tspan><tspan x="515.3" y="188" textLength="27.5" lengthAdjust="spacingAndGlyphs">h</tspan><tspan x="543.2" y="188" textLength="26" lengthAdjust="spacingAndGlyphs">a</tspan><tspan x="571.1" y="188" textLength="27.5" lengthAdjust="spacingAndGlyphs">n</tspan><tspan x="592.0" y="188">.</tspan><tspan x="626.9" y="188" textLength="25" lengthAdjust="spacingAndGlyphs">c</tspan><tspan x="654.7" y="188" textLength="27.5" lengthAdjust="spacingAndGlyphs">o</tspan><tspan x="682.6" y="188" font-family="'Liberation Mono',monospace" font-size="47">m</tspan><tspan x="710.5" y="190.5" font-size="73" textLength="25" lengthAdjust="spacingAndGlyphs">/</tspan><tspan x="738.4" y="188" textLength="16" lengthAdjust="spacingAndGlyphs">i</tspan><tspan x="766.3" y="188" textLength="24.5" lengthAdjust="spacingAndGlyphs">s</tspan><tspan x="794.1" y="188" textLength="27.5" lengthAdjust="spacingAndGlyphs">h</tspan><tspan x="822.0" y="188" textLength="27.5" lengthAdjust="spacingAndGlyphs">o</tspan><tspan x="849.9" y="188" textLength="27.5" lengthAdjust="spacingAndGlyphs">p</tspan><tspan x="877.8" y="188" textLength="18" lengthAdjust="spacingAndGlyphs">1</tspan><tspan x="905.7" y="188" textLength="27.5" lengthAdjust="spacingAndGlyphs">3</tspan><tspan x="933.5" y="188" textLength="27.5" lengthAdjust="spacingAndGlyphs">8</tspan><tspan x="961.4" y="188" textLength="27.5" lengthAdjust="spacingAndGlyphs">0</tspan><tspan x="989.3" y="188" textLength="27.5" lengthAdjust="spacingAndGlyphs">8</tspan></text></svg>
</div>
</body></html>
